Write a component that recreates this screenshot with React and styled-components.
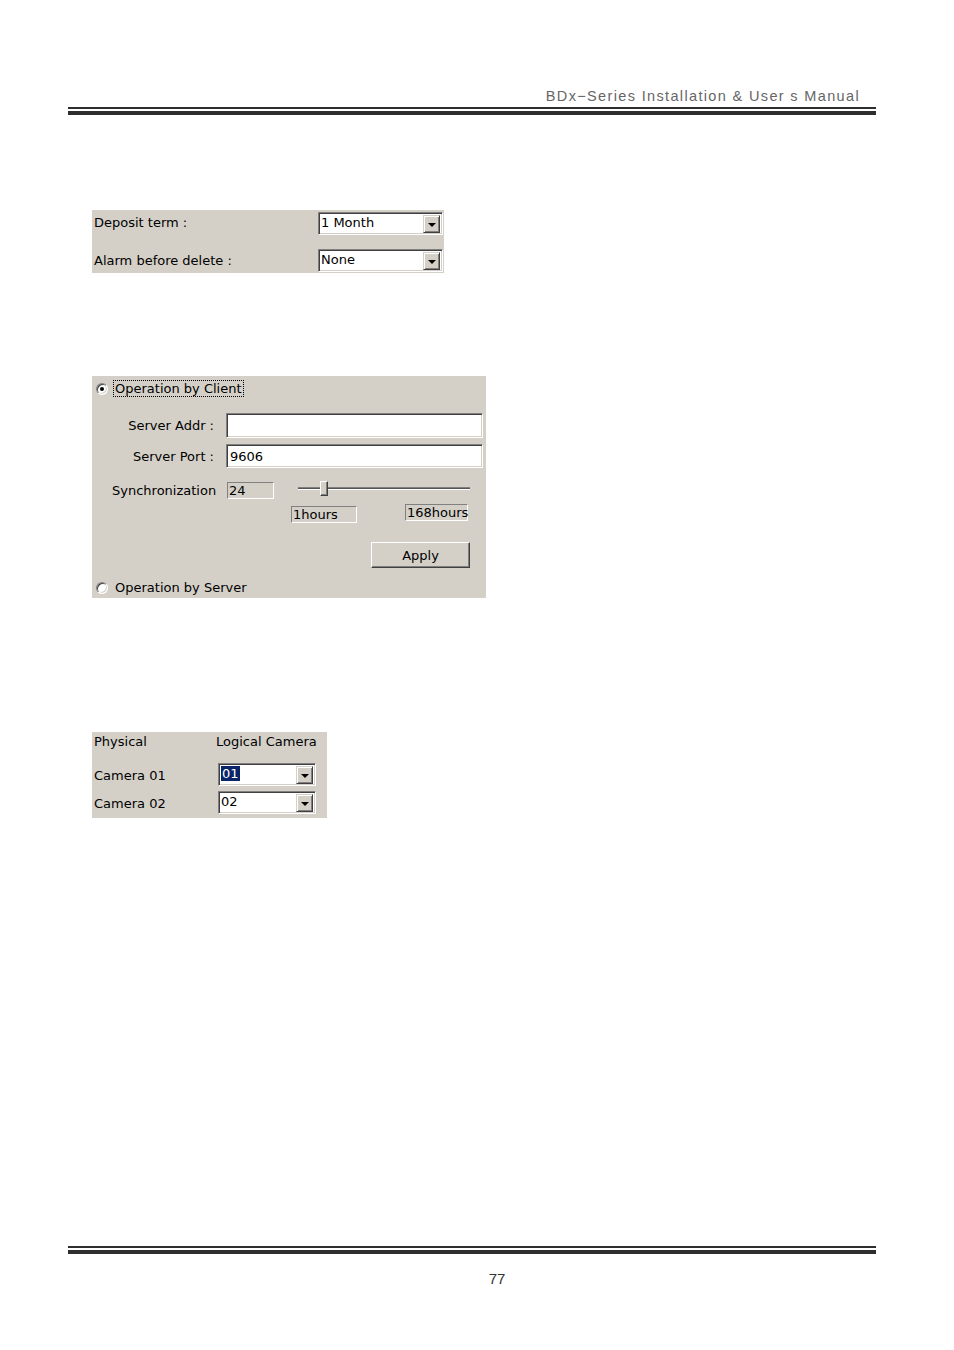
import React from "react";
import styled, { createGlobalStyle } from "styled-components";

const Global = createGlobalStyle`
  html, body { margin: 0; padding: 0; background: #fff; }
  body { font-family: "DejaVu Sans", Verdana, sans-serif; }
`;

const Page = styled.div`
  width: 954px;
  height: 1350px;
  display: flex;
  flex-direction: column;
  box-sizing: border-box;
  background: #fff;
`;

const Header = styled.header`
  margin: 88px 78px 0 68px;
  display: flex;
  flex-direction: column;
`;

const HeaderTitle = styled.div`
  align-self: flex-end;
  margin-right: 16px;
  font-family: "Liberation Sans", Arial, sans-serif;
  font-size: 14.5px;
  letter-spacing: 1.35px;
  color: #666;
  line-height: 17px;
`;

const RuleThin = styled.div`
  height: 2px;
  background: #2e2e2e;
  margin-top: ${(p) => p.$top || 0}px;
`;

const RuleThick = styled.div`
  height: 4px;
  background: #2e2e2e;
  margin-top: 2px;
`;

const Content = styled.main`
  margin-left: 92px;
  display: flex;
  flex-direction: column;
  align-items: flex-start;
  font-size: 13px;
  color: #000;
`;

const Panel = styled.div`
  background: #d4d0c8;
  width: ${(p) => p.$w}px;
  height: ${(p) => p.$h}px;
  margin-top: ${(p) => p.$top}px;
  box-sizing: border-box;
`;

/* ---------- common widgets ---------- */

const SelectBox = styled.div`
  width: ${(p) => p.$w}px;
  height: 23px;
  box-sizing: border-box;
  background: #fff;
  border: 1px solid;
  border-color: #808080 #fff #fff #808080;
  box-shadow: inset 1px 1px 0 #404040, inset -1px -1px 0 #d4d0c8;
  display: flex;
  align-items: center;
  padding: 2px 2px 1px 2px;
`;

const SelectValue = styled.span`
  flex: 1;
  line-height: 16px;
  white-space: nowrap;
  align-self: flex-start;
`;

const Highlight = styled.span`
  background: #0a246a;
  color: #fff;
  padding: 0 1px;
`;

const DropButton = styled.div`
  width: 17px;
  height: 18px;
  box-sizing: border-box;
  background: #d4d0c8;
  border: 1px solid;
  border-color: #d4d0c8 #404040 #404040 #d4d0c8;
  box-shadow: inset 1px 1px 0 #fff, inset -1px -1px 0 #808080;
  display: flex;
  align-items: center;
  justify-content: center;
`;

const Arrow = styled.span`
  width: 0;
  height: 0;
  border-left: 4px solid transparent;
  border-right: 4px solid transparent;
  border-top: 4px solid #000;
  margin-top: 1px;
`;

function Select({ w, children }) {
  return (
    <SelectBox $w={w}>
      <SelectValue>{children}</SelectValue>
      <DropButton>
        <Arrow />
      </DropButton>
    </SelectBox>
  );
}

const TextInput = styled.div`
  width: ${(p) => p.$w}px;
  height: ${(p) => p.$h}px;
  box-sizing: border-box;
  background: #fff;
  border: 1px solid;
  border-color: #808080 #fff #fff #808080;
  box-shadow: inset 1px 1px 0 #404040, inset -1px -1px 0 #d4d0c8;
  padding: 2px 3px;
  display: flex;
  align-items: center;
`;

const StaticField = styled.div`
  width: ${(p) => p.$w}px;
  height: 17px;
  box-sizing: border-box;
  background: #d4d0c8;
  border: 1px solid;
  border-color: #808080 #fff #fff #808080;
  padding: 0 1px;
  display: flex;
  align-items: center;
  line-height: 15px;
  white-space: nowrap;
`;

const Radio = styled.span`
  width: 12px;
  height: 12px;
  box-sizing: border-box;
  border-radius: 50%;
  background: #fff;
  border: 1px solid;
  border-color: #808080 #fff #fff #808080;
  box-shadow: inset 1px 1px 0 #404040, inset -1px -1px 0 #d4d0c8;
  display: inline-flex;
  align-items: center;
  justify-content: center;
  flex: none;
  &::after {
    content: "";
    width: 4px;
    height: 4px;
    border-radius: 50%;
    background: ${(p) => (p.$checked ? "#000" : "transparent")};
  }
`;

const RadioRow = styled.div`
  display: flex;
  align-items: center;
  gap: 6px;
  padding-left: 4px;
  margin-top: ${(p) => p.$top}px;
  height: 17px;
`;

const RadioLabel = styled.span`
  padding: 0 1px;
  border: 1px dotted ${(p) => (p.$focus ? "#000" : "transparent")};
  line-height: 15px;
  margin-left: -1px;
`;

const Button = styled.div`
  width: 99px;
  height: 26px;
  box-sizing: border-box;
  background: #d4d0c8;
  border: 1px solid;
  border-color: #fff #404040 #404040 #fff;
  box-shadow: inset -1px -1px 0 #808080;
  display: flex;
  align-items: center;
  justify-content: center;
`;

/* ---------- panel 1 ---------- */

const TermGrid = styled.div`
  display: grid;
  grid-template-columns: 226px 125px;
  row-gap: 14px;
  padding-top: 2px;
  align-items: center;
`;

const Label = styled.span`
  padding-left: 2px;
  line-height: 16px;
  margin-top: ${(p) => p.$dy || 0}px;
  white-space: nowrap;
`;

/* ---------- panel 2 ---------- */

const Stack = styled.div`
  display: flex;
  flex-direction: column;
`;

const FieldRow = styled.div`
  display: grid;
  grid-template-columns: 134px 257px;
  align-items: center;
  margin-top: ${(p) => p.$top}px;
`;

const RightLabel = styled.span`
  text-align: right;
  padding-right: 12px;
  white-space: nowrap;
`;

const SyncRow = styled.div`
  display: flex;
  align-items: center;
  padding-left: 20px;
  margin-top: 14px;
  height: 17px;
`;

const SyncLabel = styled.span`
  width: 115px;
  white-space: nowrap;
`;

const Slider = styled.div`
  position: relative;
  width: 172px;
  height: 16px;
  margin-left: 24px;
  margin-top: -4px;
`;

const Track = styled.div`
  position: absolute;
  left: 0;
  right: 0;
  top: 6px;
  height: 1px;
  background: #555;
  border-bottom: 1px solid #fff;
  border-top: 1px solid #808080;
`;

const Thumb = styled.div`
  position: absolute;
  top: 0;
  left: 22px;
  width: 8px;
  height: 15px;
  box-sizing: border-box;
  background: #d4d0c8;
  border: 1px solid;
  border-color: #fff #404040 #404040 #fff;
  box-shadow: inset -1px -1px 0 #808080;
`;

const HoursRow = styled.div`
  display: flex;
  align-items: flex-start;
  padding-left: 199px;
  margin-top: 7px;
  height: 19px;
`;

const HoursMax = styled.div`
  margin-left: 48px;
  margin-top: -2px;
`;

const ApplyRow = styled.div`
  padding-left: 279px;
  margin-top: 17px;
`;

/* ---------- panel 3 ---------- */

const CamGrid = styled.div`
  display: grid;
  grid-template-columns: 126px 98px;
  grid-template-rows: 24px 23px 23px;
  row-gap: 5px;
  padding-top: 2px;
  align-items: center;
`;

const CamHeader = styled.span`
  white-space: nowrap;
  padding-left: ${(p) => p.$pl || 0}px;
  margin-left: ${(p) => p.$ml || 0}px;
  align-self: start;
  line-height: 16px;
`;

/* ---------- footer ---------- */

const Footer = styled.footer`
  margin: auto 78px 0 68px;
  padding-bottom: 63px;
  display: flex;
  flex-direction: column;
`;

const PageNumber = styled.div`
  align-self: center;
  margin-top: 16px;
  margin-left: 50px;
  font-family: "Liberation Sans", Arial, sans-serif;
  font-size: 15px;
  color: #333;
  line-height: 17px;
`;

export default function App() {
  return (
    <Page>
      <Global />
      <Header>
        <HeaderTitle>BDx−Series Installation &amp; User s Manual</HeaderTitle>
        <RuleThin $top={2} />
        <RuleThick />
      </Header>

      <Content>
        <Panel $w={352} $h={63} $top={95}>
          <TermGrid>
            <Label $dy={-1}>Deposit term :</Label>
            <Select w={125}>1 Month</Select>
            <Label $dy={1}>Alarm before delete :</Label>
            <Select w={125}>None</Select>
          </TermGrid>
        </Panel>

        <Panel $w={394} $h={222} $top={103}>
          <Stack>
            <RadioRow $top={4}>
              <Radio $checked />
              <RadioLabel $focus>Operation by Client</RadioLabel>
            </RadioRow>
            <FieldRow $top={16}>
              <RightLabel>Server Addr :</RightLabel>
              <TextInput $w={257} $h={25} />
            </FieldRow>
            <FieldRow $top={6}>
              <RightLabel>Server Port :</RightLabel>
              <TextInput $w={257} $h={24}>9606</TextInput>
            </FieldRow>
            <SyncRow>
              <SyncLabel>Synchronization</SyncLabel>
              <StaticField $w={47}>24</StaticField>
              <Slider>
                <Track />
                <Thumb />
              </Slider>
            </SyncRow>
            <HoursRow>
              <StaticField $w={66}>1hours</StaticField>
              <HoursMax>
                <StaticField $w={63}>168hours</StaticField>
              </HoursMax>
            </HoursRow>
            <ApplyRow>
              <Button>Apply</Button>
            </ApplyRow>
            <RadioRow $top={11}>
              <Radio />
              <RadioLabel>Operation by Server</RadioLabel>
            </RadioRow>
          </Stack>
        </Panel>

        <Panel $w={235} $h={86} $top={134}>
          <CamGrid>
            <CamHeader $pl={2}>Physical</CamHeader>
            <CamHeader $ml={-2}>Logical Camera</CamHeader>
            <Label $dy={2}>Camera 01</Label>
            <Select w={98}>
              <Highlight>01</Highlight>
            </Select>
            <Label $dy={2}>Camera 02</Label>
            <Select w={98}>02</Select>
          </CamGrid>
        </Panel>
      </Content>

      <Footer>
        <RuleThin $top={0} />
        <RuleThick />
        <PageNumber>77</PageNumber>
      </Footer>
    </Page>
  );
}
